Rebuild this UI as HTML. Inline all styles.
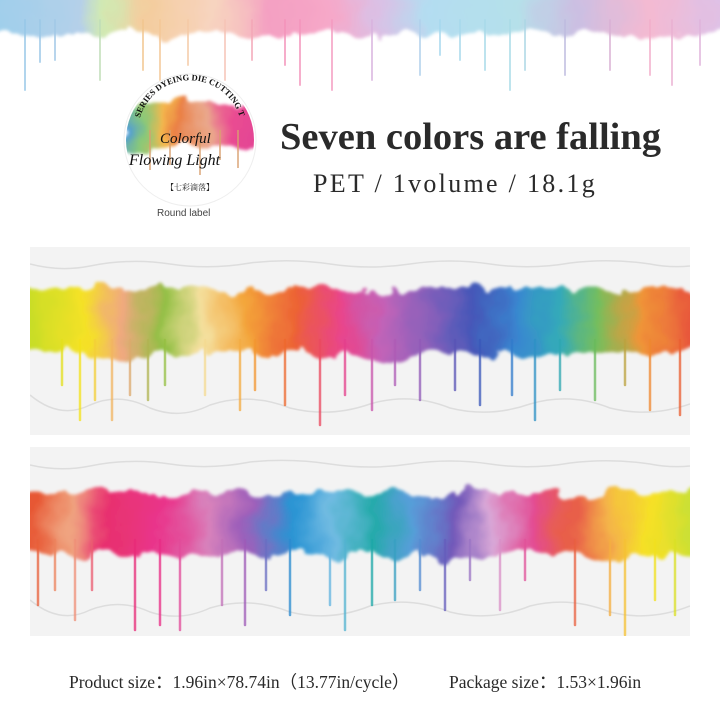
<!DOCTYPE html>
<html><head><meta charset="utf-8"><style>
html,body{margin:0;padding:0;background:#fff;width:720px;height:720px;overflow:hidden}
svg{position:absolute;left:0;top:0}
.t{position:absolute;font-family:"Liberation Serif",serif;color:#222;white-space:nowrap}
</style></head><body>
<svg width="720" height="720" viewBox="0 0 720 720">
<defs>
<filter id="wc" x="-10%" y="-30%" width="120%" height="160%">
<feTurbulence type="fractalNoise" baseFrequency="0.035" numOctaves="3" seed="4"/>
<feDisplacementMap in="SourceGraphic" scale="28" xChannelSelector="R" yChannelSelector="G"/>
<feGaussianBlur stdDeviation="1.5"/>
</filter>
<linearGradient id="g0" gradientUnits="userSpaceOnUse" x1="0" y1="0" x2="720" y2="0">
<stop offset="0" stop-color="#8fc7e8"/><stop offset=".11" stop-color="#a9c8e6"/><stop offset=".15" stop-color="#c9e6a6"/><stop offset=".2" stop-color="#f3c58e"/><stop offset=".3" stop-color="#f6cdb5"/><stop offset=".38" stop-color="#f390b8"/><stop offset=".46" stop-color="#f59ac0"/><stop offset=".52" stop-color="#d7b4e0"/><stop offset=".6" stop-color="#a6d8ef"/><stop offset=".72" stop-color="#a9dbe6"/><stop offset=".8" stop-color="#c3b4de"/><stop offset=".9" stop-color="#f3aeca"/><stop offset="1" stop-color="#d9b7e3"/>
</linearGradient>
<linearGradient id="g1" gradientUnits="userSpaceOnUse" x1="30" y1="0" x2="690" y2="0">
<stop offset="0" stop-color="#c6dc1e"/><stop offset=".08" stop-color="#f6e21a"/><stop offset=".14" stop-color="#f0a57a"/><stop offset=".2" stop-color="#8dbd3b"/><stop offset=".26" stop-color="#f5df9a"/><stop offset=".33" stop-color="#f4a130"/><stop offset=".4" stop-color="#ec5a2c"/><stop offset=".47" stop-color="#e93b86"/><stop offset=".53" stop-color="#c05bb5"/><stop offset=".6" stop-color="#8a5ab8"/><stop offset=".67" stop-color="#3c4fb5"/><stop offset=".74" stop-color="#2f82cf"/><stop offset=".8" stop-color="#2aa6b7"/><stop offset=".86" stop-color="#6fbc55"/><stop offset=".93" stop-color="#f0902e"/><stop offset="1" stop-color="#e85032"/>
</linearGradient>
<linearGradient id="g2" gradientUnits="userSpaceOnUse" x1="30" y1="0" x2="690" y2="0">
<stop offset="0" stop-color="#e7502a"/><stop offset=".06" stop-color="#f0a07a"/><stop offset=".12" stop-color="#e8286a"/><stop offset=".2" stop-color="#e92c86"/><stop offset=".27" stop-color="#d77cb9"/><stop offset=".33" stop-color="#9a58b8"/><stop offset=".4" stop-color="#1f8fd2"/><stop offset=".46" stop-color="#6ab8e2"/><stop offset=".52" stop-color="#1aa7a6"/><stop offset=".58" stop-color="#4f9ad8"/><stop offset=".64" stop-color="#6a4fb6"/><stop offset=".7" stop-color="#d8a4d6"/><stop offset=".76" stop-color="#e3428e"/><stop offset=".82" stop-color="#e85840"/><stop offset=".88" stop-color="#f5b040"/><stop offset=".94" stop-color="#f7e11c"/><stop offset="1" stop-color="#c9df2a"/>
</linearGradient>
<linearGradient id="g3" x1="0" x2="1">
<stop offset="0" stop-color="#3a8fd8"/><stop offset=".15" stop-color="#7cc36a"/><stop offset=".3" stop-color="#f4b03a"/><stop offset=".45" stop-color="#e8702e"/><stop offset=".6" stop-color="#e8a080"/><stop offset=".8" stop-color="#e83a86"/><stop offset="1" stop-color="#e0308a"/>
</linearGradient>
<clipPath id="c0"><rect x="0" y="0" width="720" height="110"/></clipPath>
<clipPath id="c1"><rect x="30" y="247" width="660" height="188"/></clipPath>
<clipPath id="c2"><rect x="30" y="447" width="660" height="189"/></clipPath>
<clipPath id="cc"><circle cx="190" cy="140" r="64"/></clipPath>
</defs>

<g clip-path="url(#c0)">
<rect x="-20" y="-30" width="760" height="64" fill="url(#g0)" filter="url(#wc)" opacity=".85"/>
<g stroke="url(#g0)" stroke-width="2" stroke-linecap="round" opacity=".75">
<line x1="25" y1="20" x2="25" y2="90"/><line x1="40" y1="20" x2="40" y2="62"/><line x1="55" y1="20" x2="55" y2="60"/><line x1="100" y1="20" x2="100" y2="80"/><line x1="143" y1="20" x2="143" y2="70"/><line x1="160" y1="20" x2="160" y2="80"/><line x1="188" y1="20" x2="188" y2="65"/><line x1="225" y1="20" x2="225" y2="80"/><line x1="252" y1="20" x2="252" y2="60"/><line x1="285" y1="20" x2="285" y2="65"/><line x1="300" y1="20" x2="300" y2="85"/><line x1="332" y1="20" x2="332" y2="90"/><line x1="372" y1="20" x2="372" y2="80"/><line x1="420" y1="20" x2="420" y2="75"/><line x1="440" y1="20" x2="440" y2="55"/><line x1="460" y1="20" x2="460" y2="60"/><line x1="485" y1="20" x2="485" y2="70"/><line x1="510" y1="20" x2="510" y2="90"/><line x1="525" y1="20" x2="525" y2="70"/><line x1="565" y1="20" x2="565" y2="75"/><line x1="610" y1="20" x2="610" y2="70"/><line x1="650" y1="20" x2="650" y2="75"/><line x1="672" y1="20" x2="672" y2="85"/><line x1="700" y1="20" x2="700" y2="65"/>
</g>
</g>

<circle cx="190" cy="140" r="66" fill="#fff" stroke="#eee"/>
<g clip-path="url(#cc)">
<rect x="120" y="102" width="140" height="45" fill="url(#g3)" filter="url(#wc)" opacity=".9"/>
<g stroke="#d9a070" stroke-width="2" opacity=".7"><line x1="150" y1="130" x2="150" y2="170"/><line x1="170" y1="130" x2="170" y2="165"/><line x1="200" y1="130" x2="200" y2="175"/><line x1="220" y1="130" x2="220" y2="160"/><line x1="238" y1="130" x2="238" y2="168"/></g>
</g>
<path id="arc" d="M140 118 A52 52 0 0 1 240 118" fill="none"/>
<text font-family="Liberation Serif,serif" font-size="8.5" font-weight="bold" fill="#111"><textPath href="#arc">SERIES DYEING DIE CUTTING TAPE</textPath></text>
<text x="160" y="143" font-family="Liberation Serif,serif" font-style="italic" font-size="15" fill="#111">Colorful</text>
<text x="129" y="165" font-family="Liberation Serif,serif" font-style="italic" font-size="16" fill="#111">Flowing Light</text>
<text x="190" y="190" text-anchor="middle" font-family="Noto Serif CJK SC,serif" font-size="8" fill="#222">【七彩滴落】</text>

<rect x="30" y="247" width="660" height="188" fill="#f3f3f3"/>
<g clip-path="url(#c1)">
<path d="M30 264 Q60 272 90 266 Q130 258 170 264 Q210 270 250 263 Q290 258 330 264 Q370 270 410 264 Q450 258 490 264 Q530 270 570 263 Q610 258 650 264 Q670 268 690 266" fill="none" stroke="#ddd" stroke-width="1.5"/>
<path d="M30 395 Q60 420 90 405 Q120 392 150 408 Q180 420 210 405 Q250 392 290 408 Q330 418 370 404 Q410 392 450 408 Q490 418 530 404 Q570 392 610 408 Q650 418 690 404" fill="none" stroke="#ddd" stroke-width="1.5"/>
<rect x="10" y="288" width="700" height="66" fill="url(#g1)" filter="url(#wc)" opacity=".95"/>
<g stroke="url(#g1)" stroke-width="2.5" stroke-linecap="round" opacity=".75">
<line x1="62" y1="340" x2="62" y2="385"/><line x1="80" y1="340" x2="80" y2="420"/><line x1="95" y1="340" x2="95" y2="400"/><line x1="112" y1="340" x2="112" y2="420"/><line x1="130" y1="340" x2="130" y2="395"/><line x1="148" y1="340" x2="148" y2="400"/><line x1="165" y1="340" x2="165" y2="385"/><line x1="205" y1="340" x2="205" y2="395"/><line x1="240" y1="340" x2="240" y2="410"/><line x1="255" y1="340" x2="255" y2="390"/><line x1="285" y1="340" x2="285" y2="405"/><line x1="320" y1="340" x2="320" y2="425"/><line x1="345" y1="340" x2="345" y2="395"/><line x1="372" y1="340" x2="372" y2="410"/><line x1="395" y1="340" x2="395" y2="385"/><line x1="420" y1="340" x2="420" y2="400"/><line x1="455" y1="340" x2="455" y2="390"/><line x1="480" y1="340" x2="480" y2="405"/><line x1="512" y1="340" x2="512" y2="395"/><line x1="535" y1="340" x2="535" y2="420"/><line x1="560" y1="340" x2="560" y2="390"/><line x1="595" y1="340" x2="595" y2="400"/><line x1="625" y1="340" x2="625" y2="385"/><line x1="650" y1="340" x2="650" y2="410"/><line x1="680" y1="340" x2="680" y2="415"/>
</g>
</g>

<rect x="30" y="447" width="660" height="189" fill="#f3f3f3"/>
<g clip-path="url(#c2)">
<path d="M30 465 Q60 472 90 466 Q130 458 170 464 Q210 470 250 462 Q290 458 330 464 Q370 470 410 464 Q450 458 490 464 Q530 470 570 463 Q610 458 650 464 Q670 468 690 466" fill="none" stroke="#ddd" stroke-width="1.5"/>
<path d="M30 600 Q60 625 90 610 Q120 598 150 612 Q180 622 210 608 Q250 596 290 612 Q330 622 370 606 Q410 596 450 612 Q490 622 530 606 Q570 596 610 612 Q650 622 690 606" fill="none" stroke="#ddd" stroke-width="1.5"/>
<rect x="10" y="492" width="700" height="64" fill="url(#g2)" filter="url(#wc)" opacity=".95"/>
<g stroke="url(#g2)" stroke-width="2.5" stroke-linecap="round" opacity=".75">
<line x1="38" y1="540" x2="38" y2="605"/><line x1="55" y1="540" x2="55" y2="590"/><line x1="75" y1="540" x2="75" y2="620"/><line x1="92" y1="540" x2="92" y2="590"/><line x1="135" y1="540" x2="135" y2="630"/><line x1="160" y1="540" x2="160" y2="625"/><line x1="180" y1="540" x2="180" y2="630"/><line x1="222" y1="540" x2="222" y2="605"/><line x1="245" y1="540" x2="245" y2="625"/><line x1="266" y1="540" x2="266" y2="590"/><line x1="290" y1="540" x2="290" y2="615"/><line x1="330" y1="540" x2="330" y2="605"/><line x1="345" y1="540" x2="345" y2="630"/><line x1="372" y1="540" x2="372" y2="605"/><line x1="395" y1="540" x2="395" y2="600"/><line x1="420" y1="540" x2="420" y2="590"/><line x1="445" y1="540" x2="445" y2="610"/><line x1="470" y1="540" x2="470" y2="580"/><line x1="500" y1="540" x2="500" y2="610"/><line x1="525" y1="540" x2="525" y2="580"/><line x1="575" y1="540" x2="575" y2="625"/><line x1="610" y1="540" x2="610" y2="615"/><line x1="625" y1="540" x2="625" y2="635"/><line x1="655" y1="540" x2="655" y2="600"/><line x1="675" y1="540" x2="675" y2="615"/>
</g>
</g>
</svg>

<div class="t" style="left:157px;top:208px;font-family:'Liberation Sans',sans-serif;font-size:10px;color:#444">Round label</div>
<div class="t" style="left:280px;top:115px;font-size:38.5px;font-weight:bold;color:#2a2a2a">Seven colors are falling</div>
<div class="t" style="left:313px;top:169px;font-size:26px;letter-spacing:2.3px;color:#2a2a2a">PET / 1volume / 18.1g</div>
<div class="t" style="left:69px;top:669px;font-size:17.5px;color:#2a2a2a">Product size：1.96in×78.74in（13.77in/cycle）</div>
<div class="t" style="left:449px;top:669px;font-size:17.5px;color:#2a2a2a">Package size：1.53×1.96in</div>
</body></html>
